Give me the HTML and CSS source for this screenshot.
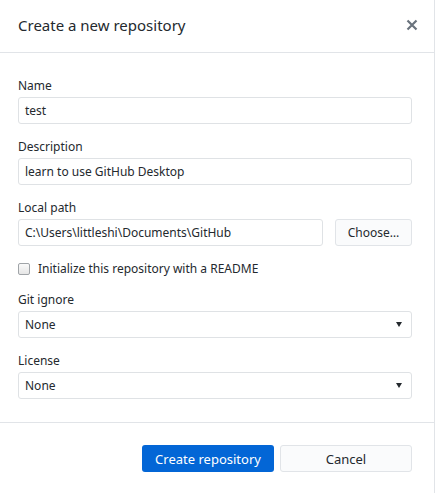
FILE: index.html
```html
<!DOCTYPE html>
<html>
<head>
<meta charset="utf-8">
<link rel="stylesheet" href="styles.css">
</head>
<body>
<div class="dialog">
  <div class="header">
    <div class="title">Create a new repository</div>
    <svg class="close" width="12" height="12" viewBox="0 0 12 12"><path d="M1.5 1.5 L10.5 10.5 M10.5 1.5 L1.5 10.5" stroke="#6a737d" stroke-width="2.2" stroke-linecap="butt"/></svg>
  </div>
  <div class="content">
    <div class="field">
      <div class="label">Name</div>
      <div class="input">test</div>
    </div>
    <div class="field">
      <div class="label">Description</div>
      <div class="input">learn to use GitHub Desktop</div>
    </div>
    <div class="field">
      <div class="label">Local path</div>
      <div class="row">
        <div class="input grow">C:\Users\littleshi\Documents\GitHub</div>
        <div class="btn choose">Choose…</div>
      </div>
    </div>
    <div class="check">
      <span class="box"></span>
      <span>Initialize this repository with a README</span>
    </div>
    <div class="field">
      <div class="label">Git ignore</div>
      <div class="input select"><span>None</span><span class="arrow"></span></div>
    </div>
    <div class="field last">
      <div class="label">License</div>
      <div class="input select"><span>None</span><span class="arrow"></span></div>
    </div>
  </div>
  <div class="footer">
    <div class="btn primary">Create repository</div>
    <div class="btn cancel">Cancel</div>
  </div>
</div>
</body>
</html>
```
FILE: styles.css
```css
* { box-sizing: border-box; }
html, body { margin: 0; padding: 0; background: #fff; }
body {
  font-family: "Noto Sans", "Open Sans", "Liberation Sans", sans-serif;
  font-size: 12px;
  color: #24292e;
}
.dialog {
  width: 435px;
  height: 493px;
  border-right: 1px solid #e1e4e8;
  display: flex;
  flex-direction: column;
}
.header {
  height: 53px;
  border-bottom: 1px solid #e1e4e8;
  display: flex;
  align-items: center;
  justify-content: space-between;
  padding: 0 16px 2px 18px;
}
.title {
  font-size: 15px;
  color: #24292e;
}
.close { display: block; margin-top: -1px; }
.content {
  padding: 25px 22px 23px 18px;
  border-bottom: 1px solid #e1e4e8;
  display: flex;
  flex-direction: column;
}
.field { margin-bottom: 15px; }
.field.last { margin-bottom: 0; }
.label {
  line-height: 16px;
  margin-bottom: 3px;
  color: #24292e;
}
.input {
  height: 27px;
  border: 1px solid #dfe2e5;
  border-radius: 3px;
  padding: 0 6px;
  display: flex;
  align-items: center;
  background: #fff;
  color: #24292e;
  white-space: nowrap;
}
.row { display: flex; gap: 12px; }
.grow { flex: 1; }
.btn {
  height: 27px;
  border-radius: 3px;
  display: flex;
  align-items: center;
  justify-content: center;
  white-space: nowrap;
}
.choose {
  width: 77px;
  border: 1px solid #e1e4e8;
  background: #fafbfc;
}
.check {
  display: flex;
  align-items: center;
  gap: 8px;
  line-height: 16px;
  margin: 0 0 15px 0;
}
.box {
  width: 12px;
  height: 12px;
  border: 1px solid #a0a4a8;
  border-radius: 2px;
  background: linear-gradient(#fafafa, #e6e6e6);
}
.select { justify-content: space-between; padding-right: 9px; }
.arrow {
  width: 0; height: 0;
  border-left: 3px solid transparent;
  border-right: 3px solid transparent;
  border-top: 5px solid #24292e;
}
.footer {
  flex: 1;
  display: flex;
  justify-content: flex-end;
  align-items: flex-start;
  gap: 6px;
  padding: 22px 22px 0 0;
}
.primary {
  width: 132px;
  background: #0366d6;
  color: #fff;
  font-size: 13px;
}
.cancel {
  width: 132px;
  border: 1px solid #e1e4e8;
  background: #fafbfc;
  font-size: 13px;
}
```
